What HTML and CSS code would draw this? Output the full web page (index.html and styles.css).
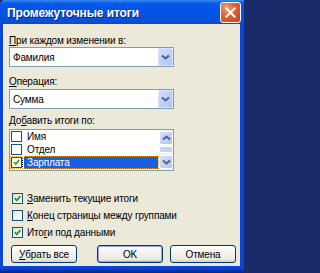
FILE: index.html
```html
<!DOCTYPE html>
<html>
<head>
<meta charset="utf-8">
<title>Промежуточные итоги</title>
<link rel="stylesheet" href="styles.css">
</head>
<body>
<div class="window">
  <div class="titlebar">
    <span class="title">Промежуточные итоги</span>
    <span class="close"><svg width="19" height="19" viewBox="0 0 19 19"><path d="M5.5 5.5 L13.5 13.5 M13.5 5.5 L5.5 13.5" stroke="#fff" stroke-width="2.2" stroke-linecap="square"/></svg></span>
  </div>
  <div class="client">
    <div class="label"><u>П</u>ри каждом изменении в:</div>
    <div class="combo">
      <span class="combo-text">Фамилия</span>
      <span class="dd"><svg width="9" height="6" viewBox="0 0 9 6"><path d="M1 1.5 L4.5 4.5 L8 1.5" fill="none" stroke="#4D6185" stroke-width="2"/></svg></span>
    </div>
    <div class="label l2"><u>О</u>перация:</div>
    <div class="combo c2">
      <span class="combo-text">Сумма</span>
      <span class="dd"><svg width="9" height="6" viewBox="0 0 9 6"><path d="M1 1.5 L4.5 4.5 L8 1.5" fill="none" stroke="#4D6185" stroke-width="2"/></svg></span>
    </div>
    <div class="label l3">До<u>б</u>авить итоги по:</div>
    <div class="listbox">
      <div class="items">
        <div class="item"><span class="lcb"></span><span class="itext">Имя</span></div>
        <div class="item"><span class="lcb"></span><span class="itext">Отдел</span></div>
        <div class="item sel"><span class="lcb"><svg width="9" height="9" viewBox="0 0 9 9"><path d="M2 4 L3.8 6.2 L7 2" fill="none" stroke="#21A121" stroke-width="1.6"/></svg></span><span class="itext">Зарплата</span></div>
      </div>
      <div class="vscroll">
        <div class="sbtn"><svg width="9" height="6" viewBox="0 0 9 6"><path d="M1 4.5 L4.5 1.5 L8 4.5" fill="none" stroke="#4D6185" stroke-width="2"/></svg></div>
        <div class="thumb"></div>
        <div class="track"></div>
        <div class="sbtn"><svg width="9" height="6" viewBox="0 0 9 6"><path d="M1 1.5 L4.5 4.5 L8 1.5" fill="none" stroke="#4D6185" stroke-width="2"/></svg></div>
      </div>
    </div>
    <div class="checks">
      <div class="check"><span class="cb"><svg width="9" height="9" viewBox="0 0 9 9"><path d="M1.8 4.2 L3.8 6.4 L7.4 2.2" fill="none" stroke="#21A121" stroke-width="1.8"/></svg></span><span><u>З</u>аменить текущие итоги</span></div>
      <div class="check"><span class="cb"></span><span><u>К</u>онец страницы между группами</span></div>
      <div class="check"><span class="cb"><svg width="9" height="9" viewBox="0 0 9 9"><path d="M1.8 4.2 L3.8 6.4 L7.4 2.2" fill="none" stroke="#21A121" stroke-width="1.8"/></svg></span><span>Ито<u>г</u>и под данными</span></div>
    </div>
    <div class="buttons">
      <div class="btn b1"><u>У</u>брать все</div>
      <div class="btn b2 default">OK</div>
      <div class="btn b3">Отмена</div>
    </div>
  </div>
</div>
</body>
</html>
```

FILE: styles.css
```css
html, body {
  margin: 0;
  padding: 0;
  background: #1b2a6a;
}

.window {
  width: 244px;
  height: 273px;
  display: flex;
  flex-direction: column;
  background: linear-gradient(to bottom, #0846D8 0, #0846D8 268px, #0A36B0 270px, #072690 273px);
  border-top-left-radius: 5px;
  overflow: hidden;
  font-family: "Liberation Sans", Arial, sans-serif;
  font-size: 10px;
  letter-spacing: -0.15px;
  color: #000;
}

.titlebar {
  height: 24px;
  flex: none;
  display: flex;
  align-items: center;
  padding-left: 7px;
  background: linear-gradient(to bottom, #3F8CF3 0, #2A78F0 1px, #0A5EE6 3px, #0556E8 6px, #0152E2 16px, #0A4FD8 22px, #0846D0 24px);
}

.title {
  color: #fff;
  font-weight: bold;
  font-size: 12px;
  letter-spacing: -0.1px;
  text-shadow: 1px 1px 0 #0A1E8C;
  margin-top: 1px;
}

.close {
  margin-left: auto;
  margin-right: 3px;
  width: 19px;
  height: 19px;
  border: 1px solid #fff;
  border-radius: 3px;
  background: radial-gradient(circle at 30% 25%, #F0A080 0, #E2623A 40%, #C8401A 100%);
  display: flex;
}

.client {
  flex: none;
  height: 242px;
  margin: 0 4px 0 3px;
  background: #ECE9D8;
  padding: 10px 0 0 6px;
  box-sizing: border-box;
  display: flex;
  flex-direction: column;
}

.label {
  height: 13px;
  line-height: 13px;
  white-space: nowrap;
}

.l2 { margin-top: 8px; }
.l3 { margin-top: 5px; }

u {
  text-decoration: underline;
  text-underline-offset: 1px;
}

.combo {
  width: 165px;
  height: 20px;
  box-sizing: border-box;
  border: 1px solid #7F9DB9;
  background: #fff;
  display: flex;
  align-items: center;
}

.c2 { margin-top: 1px; }

.combo-text {
  padding-left: 3px;
  flex: 1;
  line-height: 13px;
}

.dd {
  width: 15px;
  height: 18px;
  box-sizing: border-box;
  border: 1px solid #D6E3FC;
  border-radius: 2px;
  background: linear-gradient(135deg, #D2DEFC 0, #BCCDF8 60%, #B2C6F6 100%);
  display: flex;
  align-items: center;
  justify-content: center;
}

.listbox {
  margin-top: 2px;
  width: 165px;
  height: 42px;
  box-sizing: border-box;
  border: 1px solid #7F9DB9;
  background: #fff;
  display: flex;
}

.items {
  flex: 1;
  display: flex;
  flex-direction: column;
}

.item {
  height: 13px;
  display: flex;
  align-items: center;
  line-height: 13px;
}

.lcb {
  width: 11px;
  height: 11px;
  box-sizing: border-box;
  border: 1px solid #1C5180;
  background: #fff;
  margin-left: 1px;
  display: flex;
  align-items: center;
  justify-content: center;
}

.itext {
  padding-left: 3px;
  margin-left: 2px;
  flex: 1;
  height: 13px;
}

.item.sel {
  outline: 1px dotted #E8A020;
  outline-offset: -1px;
}

.item.sel .lcb {
  outline: 1px dotted #000;
}

.item.sel .itext {
  background: #1660E4;
  color: #fff;
  margin-right: 1px;
}

.vscroll {
  width: 14px;
  flex: none;
  background: #F4F2EA;
  display: flex;
  flex-direction: column;
  padding: 1px 0;
  box-sizing: border-box;
}

.sbtn {
  height: 14px;
  box-sizing: border-box;
  border: 1px solid #fff;
  border-radius: 2px;
  background: linear-gradient(135deg, #D6E2FC 0, #BED0F8 60%, #AFC4F4 100%);
  display: flex;
  align-items: center;
  justify-content: center;
}

.thumb {
  height: 7px;
  margin-top: 1px;
  box-sizing: border-box;
  border: 1px solid #fff;
  border-radius: 2px;
  background: #C3D4FA;
}

.track { flex: 1; }

.checks {
  margin-top: 19px;
  display: flex;
  flex-direction: column;
}

.check {
  height: 17px;
  display: flex;
  align-items: center;
  white-space: nowrap;
  line-height: 13px;
}

.cb {
  width: 11px;
  height: 11px;
  box-sizing: border-box;
  border: 1px solid #1C5180;
  background: linear-gradient(135deg, #DCDCD7 0, #F6F6F3 60%, #FFFFFF 100%);
  margin-left: 3px;
  margin-right: 4px;
  display: flex;
  align-items: center;
  justify-content: center;
}

.buttons {
  margin-top: 4px;
  display: flex;
  padding-left: 2px;
}

.btn {
  height: 18px;
  width: 66px;
  box-sizing: border-box;
  border: 1px solid #003C74;
  border-radius: 3px;
  background: linear-gradient(to bottom, #FFFFFF 0, #F4F3EE 40%, #ECEBE6 80%, #D8D2C6 100%);
  display: flex;
  align-items: center;
  justify-content: center;
  line-height: 13px;
}

.b2 { margin-left: 20px; }
.b3 { margin-left: 7px; }

.btn.default {
  box-shadow: inset 0 0 0 1px #8FA8EC;
}
```
